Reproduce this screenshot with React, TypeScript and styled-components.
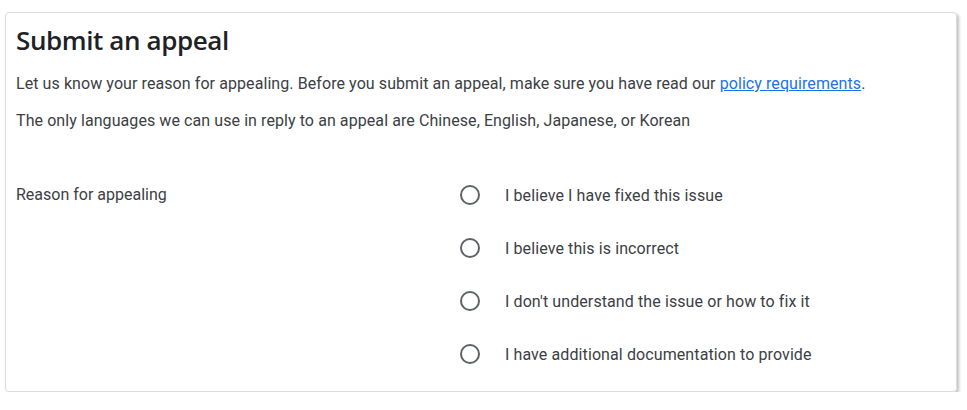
import { FC, useState } from 'react';
import styled, { createGlobalStyle } from 'styled-components';

const GlobalStyle = createGlobalStyle`
  html, body {
    margin: 0;
    padding: 0;
    background: #fff;
  }
  body {
    font-family: Roboto, Arial, sans-serif;
  }
`;

const Page = styled.div`
  padding: 12px 10px 0 5px;
`;

const Card = styled.section`
  box-sizing: border-box;
  width: 952px;
  height: 380px;
  border: 1px solid #dadce0;
  border-radius: 4px;
  box-shadow: 2px 2px 3px rgba(60, 64, 67, 0.32);
  padding: 11px 10px 0 10px;
  color: #3c4043;
`;

const Title = styled.h1`
  margin: 0;
  font-family: 'Open Sans', Roboto, sans-serif;
  font-weight: 600;
  font-size: 26px;
  line-height: 32px;
  color: #202124;
  letter-spacing: -0.4px;
`;

const Paragraph = styled.p`
  margin: 0;
  font-size: 16px;
  line-height: 20px;
  letter-spacing: 0.08px;
  color: #3c4043;
  & + & {
    margin-top: 17px;
  }
`;

const Intro = styled.div`
  margin-top: 18px;
`;

const Link = styled.a`
  color: #1a73e8;
  text-decoration: underline;
`;

const FieldRow = styled.div`
  display: grid;
  grid-template-columns: 444px 1fr;
  margin-top: 41px;
`;

const FieldLabel = styled.div`
  font-size: 16px;
  line-height: 20px;
  padding-top: 13px;
`;

const Options = styled.div`
  display: flex;
  flex-direction: column;
  gap: 7px;
`;

const Option = styled.label`
  display: flex;
  align-items: center;
  gap: 25px;
  height: 46px;
  font-size: 16px;
  letter-spacing: 0.1px;
  cursor: pointer;
`;

const Radio = styled.span<{ $checked: boolean }>`
  box-sizing: border-box;
  width: 20px;
  height: 20px;
  border-radius: 50%;
  border: 2px solid ${(p) => (p.$checked ? '#1a73e8' : '#5f6368')};
  display: flex;
  align-items: center;
  justify-content: center;
  &::after {
    content: '';
    width: 10px;
    height: 10px;
    border-radius: 50%;
    background: ${(p) => (p.$checked ? '#1a73e8' : 'transparent')};
  }
`;

const reasons = [
  'I believe I have fixed this issue',
  'I believe this is incorrect',
  "I don't understand the issue or how to fix it",
  'I have additional documentation to provide'
];

const App: FC = () => {
  const [selected, setSelected] = useState<number | null>(null);
  return (
    <Page>
      <GlobalStyle />
      <Card>
        <Title>Submit an appeal</Title>
        <Intro>
          <Paragraph>
            Let us know your reason for appealing. Before you submit an appeal, make sure you have
            read our <Link href="#">policy requirements</Link>.
          </Paragraph>
          <Paragraph>
            The only languages we can use in reply to an appeal are Chinese, English, Japanese, or
            Korean
          </Paragraph>
        </Intro>
        <FieldRow>
          <FieldLabel>Reason for appealing</FieldLabel>
          <Options>
            {reasons.map((r, i) => (
              <Option key={r} onClick={() => setSelected(i)}>
                <Radio $checked={selected === i} />
                {r}
              </Option>
            ))}
          </Options>
        </FieldRow>
      </Card>
    </Page>
  );
};

export default App;
